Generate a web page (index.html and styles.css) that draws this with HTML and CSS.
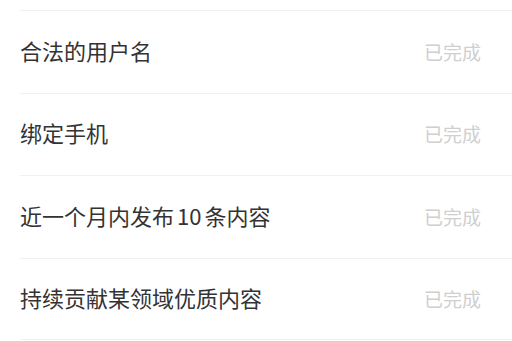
FILE: index.html
```html
<!DOCTYPE html>
<html lang="zh-CN">
<head>
<meta charset="utf-8">
<link rel="stylesheet" href="styles.css">
</head>
<body>
<div class="list">
  <div class="row"><span class="label">合法的用户名</span><span class="status">已完成</span></div>
  <div class="row"><span class="label">绑定手机</span><span class="status">已完成</span></div>
  <div class="row"><span class="label">近一个月内发布<span class="num">10</span>条内容</span><span class="status">已完成</span></div>
  <div class="row"><span class="label">持续贡献某领域优质内容</span><span class="status">已完成</span></div>
</div>
</body>
</html>
```
FILE: styles.css
```css
html, body {
  margin: 0;
  padding: 0;
  background: #fff;
}
body {
  font-family: "Noto Sans CJK SC", "Noto Sans", sans-serif;
}
.list {
  padding-top: 10px;
  margin-left: 20px;
}
.row {
  box-sizing: border-box;
  height: 82.5px;
  border-top: 1px solid #f0f0f0;
  display: flex;
  align-items: center;
  justify-content: space-between;
  padding-right: 31px;
}
.row:last-child {
  border-bottom: 1px solid #f0f0f0;
}
.label {
  font-size: 22px;
  color: #333;
  margin-bottom: 4px;
}
.num {
  margin: 0 3px;
}
.status {
  font-size: 19px;
  color: #cfcfcf;
  margin-bottom: 1px;
}
```
